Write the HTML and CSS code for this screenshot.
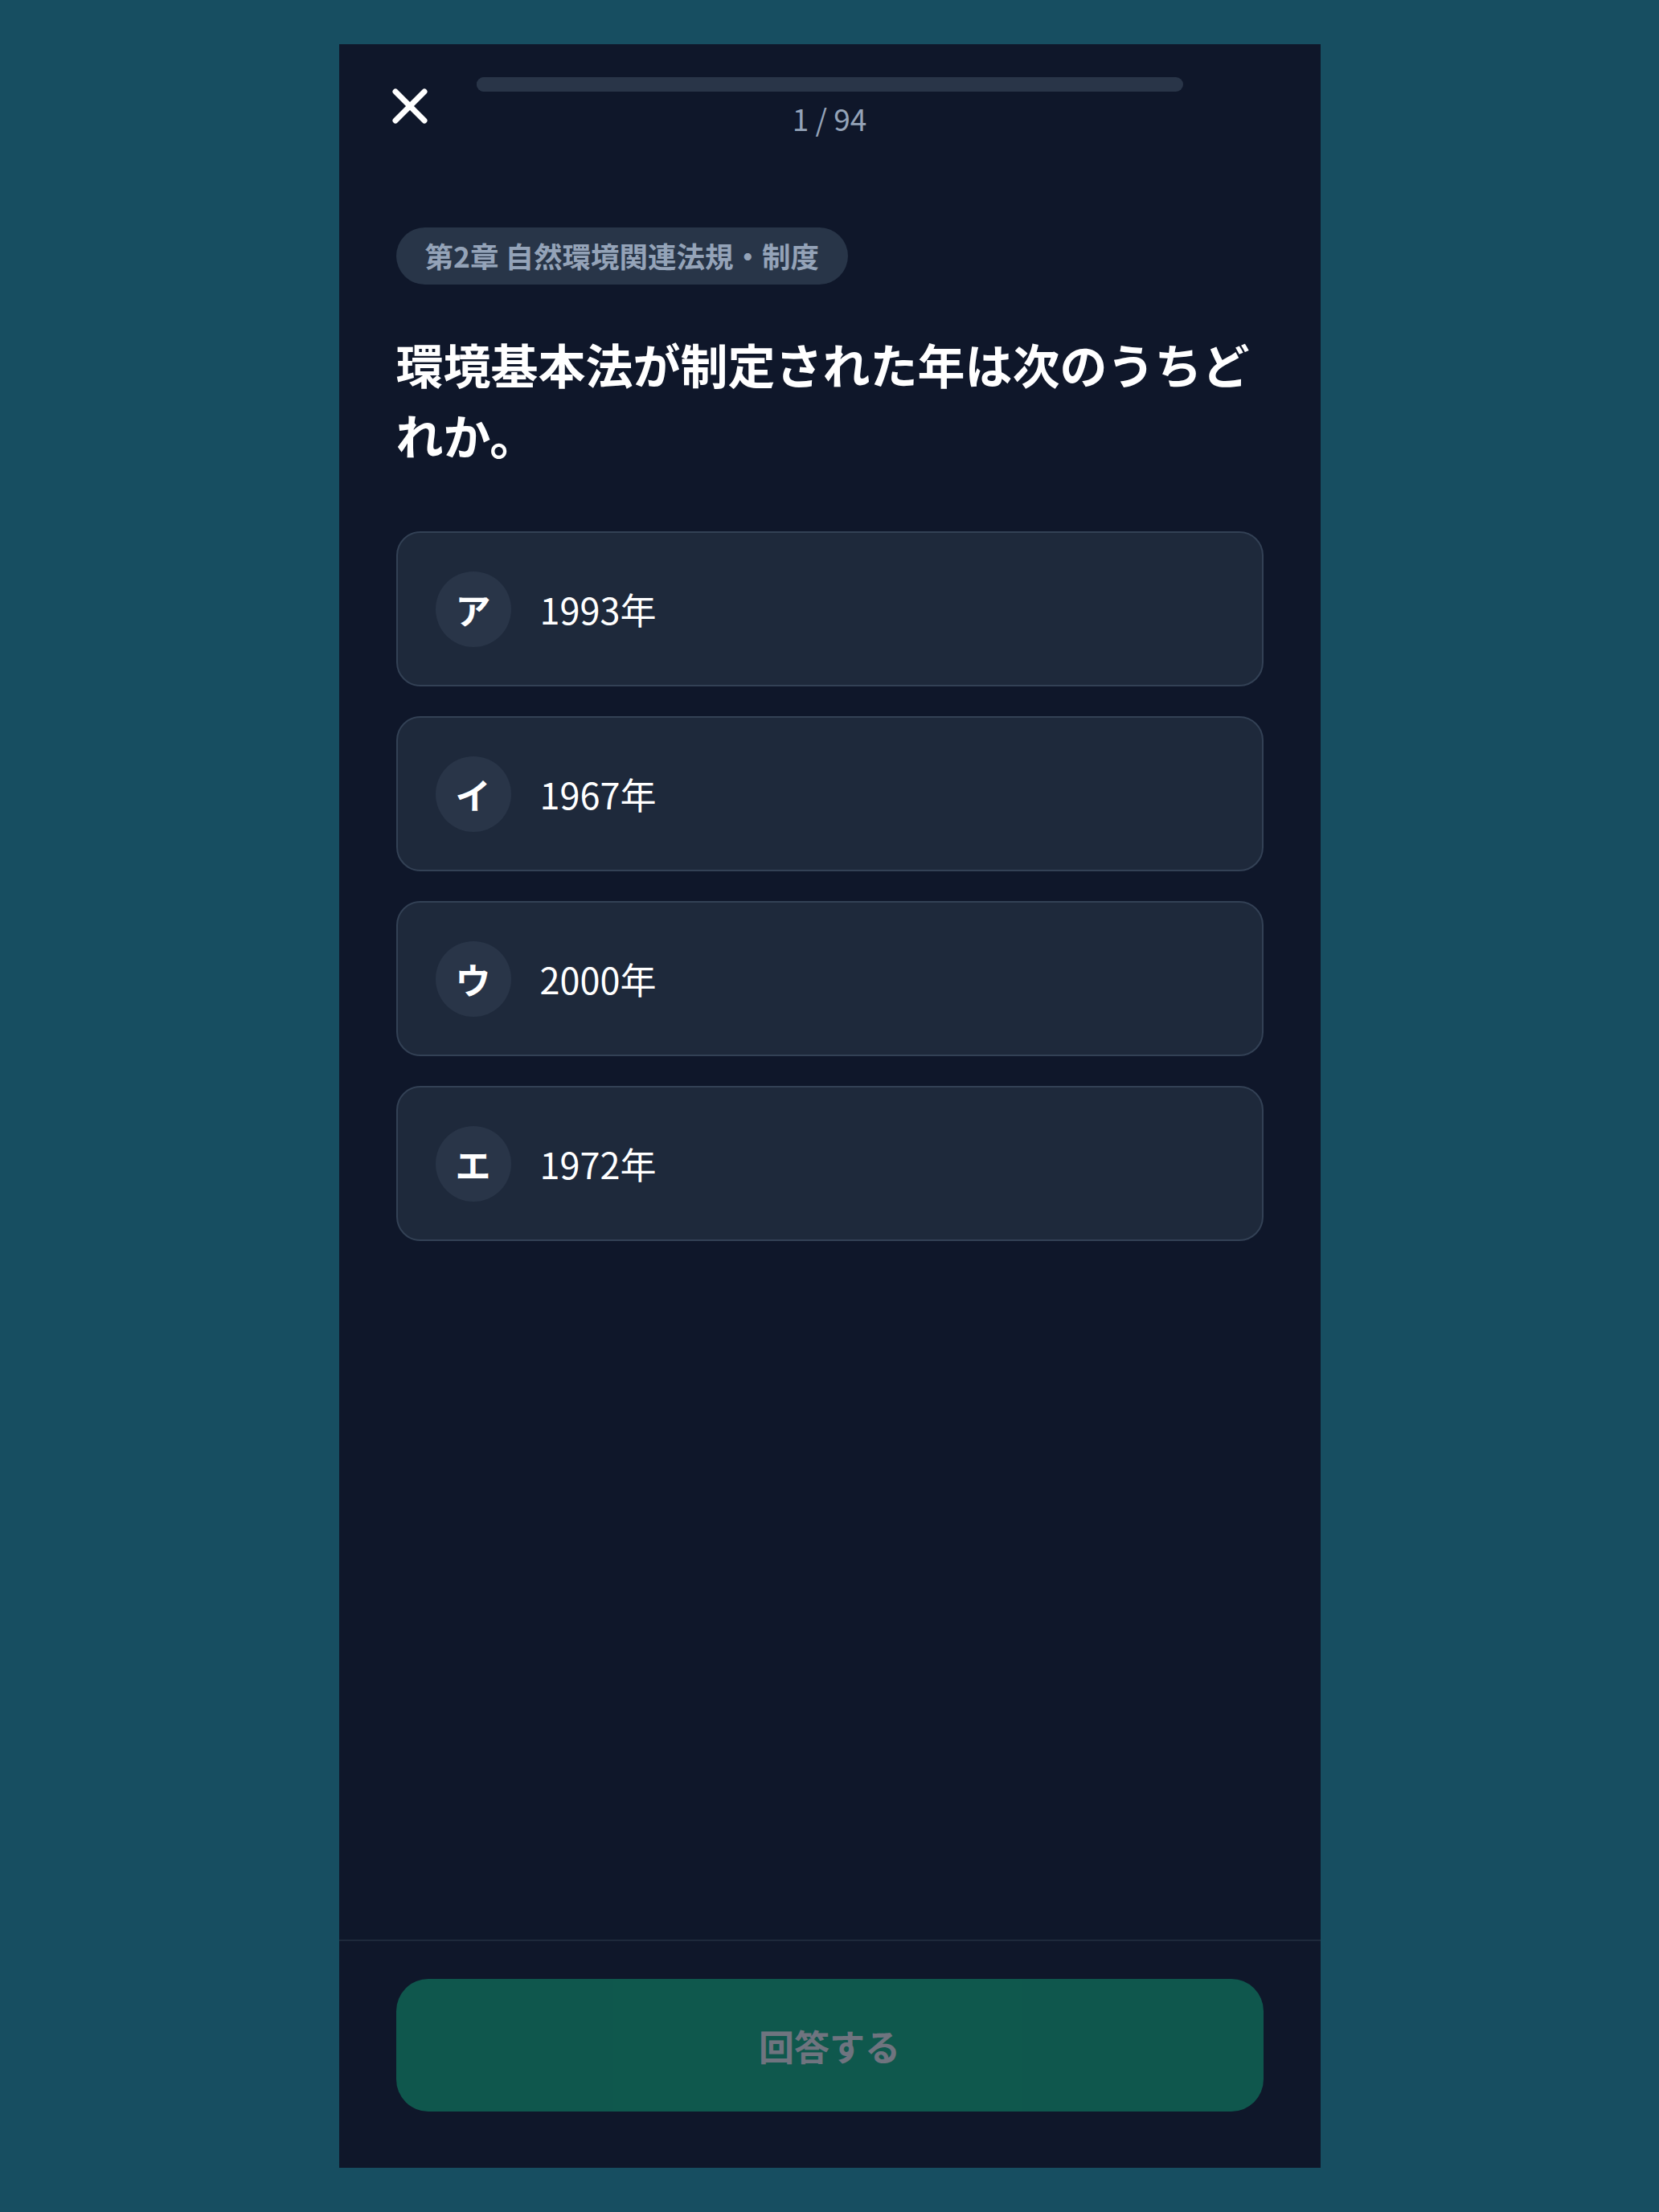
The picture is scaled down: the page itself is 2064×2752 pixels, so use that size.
FILE: index.html
```html
<!DOCTYPE html>
<html lang="ja">
<head>
  <meta charset="UTF-8" />
  <meta name="viewport" content="width=device-width, initial-scale=1" />
  <title>環境社会検定 過去問</title>
  <link rel="stylesheet" href="styles.css">
</head>
<body>
  <div class="quiz">
    <header class="quiz-header">
      <button class="close-btn" aria-label="閉じる">
        <svg width="56" height="56" viewBox="0 0 56 56">
          <path d="M6 9 L42 45 M42 9 L6 45" stroke="#ffffff" stroke-width="7" stroke-linecap="round" fill="none" />
        </svg>
      </button>
      <div class="progress">
        <div class="progress-track"><div class="progress-fill" style="width: 1.06%;"></div></div>
        <div class="progress-count">1 / 94</div>
      </div>
      <div class="header-spacer"></div>
    </header>

    <main class="quiz-body">
      <span class="chapter">第2章 自然環境関連法規・制度</span>
      <h1 class="question">環境基本法が制定された年は次のうちどれか。</h1>

      <div class="choices">
        <button class="choice"><span class="choice-mark">ア</span><span class="choice-text">1993年</span></button>
        <button class="choice"><span class="choice-mark">イ</span><span class="choice-text">1967年</span></button>
        <button class="choice"><span class="choice-mark">ウ</span><span class="choice-text">2000年</span></button>
        <button class="choice"><span class="choice-mark">エ</span><span class="choice-text">1972年</span></button>
      </div>
    </main>

    <footer class="quiz-footer">
      <button class="answer-btn" disabled>回答する</button>
    </footer>
  </div>
</body>
</html>
```

FILE: styles.css
```css
/* Page */
body {
  margin: 0;
  padding: 55px 0;
  background-color: #174e61;
  display: flex;
  justify-content: center;
  font-family: "Noto Sans CJK JP", "Noto Sans", sans-serif;
  color: #f8fafc;
}
button {
  font-family: inherit;
  border: none;
  background: none;
  padding: 0;
  cursor: pointer;
}

/* Phone frame */
.quiz {
  width: 1221px;
  height: 2642px;
  background-color: #0f172a;
  display: flex;
  flex-direction: column;
}

/* Header with close + progress */
.quiz-header {
  display: flex;
  align-items: center;
  gap: 51px;
  padding: 41px 64px 0;
}
.close-btn {
  width: 56px;
  height: 56px;
  display: flex;
}
.header-spacer {
  width: 56px;
}
.progress {
  flex: 1;
  display: flex;
  flex-direction: column;
  align-items: center;
  gap: 11px;
}
.progress-track {
  width: 100%;
  height: 18px;
  border-radius: 9px;
  background-color: #293548;
  overflow: hidden;
}
.progress-fill {
  height: 100%;
  background-color: #293548;
}
.progress-count {
  font-size: 37px;
  line-height: 44px;
  color: #94a3b8;
}

/* Question area */
.quiz-body {
  flex: 1;
  padding: 114px 71px 0;
  display: flex;
  flex-direction: column;
  align-items: flex-start;
}
.chapter {
  display: inline-block;
  height: 71px;
  line-height: 69px;
  padding: 0 36px;
  border-radius: 36px;
  background-color: #283548;
  color: #94a3b8;
  font-size: 35.5px;
  font-weight: bold;
}
.question {
  margin: 55px 0 76px;
  font-size: 59px;
  line-height: 88px;
  font-weight: bold;
  color: #ffffff;
}

/* Answer choices */
.choices {
  align-self: stretch;
  display: flex;
  flex-direction: column;
  gap: 37px;
}
.choice {
  height: 193px;
  box-sizing: border-box;
  display: flex;
  align-items: center;
  gap: 36px;
  padding: 0 47px;
  border: 2px solid #334155;
  border-radius: 30px;
  background-color: #1e293b;
  color: #ffffff;
  text-align: left;
}
.choice-mark {
  width: 94px;
  height: 94px;
  border-radius: 50%;
  background-color: #293548;
  display: flex;
  align-items: center;
  justify-content: center;
  font-size: 44px;
  font-weight: bold;
}
.choice-text {
  font-size: 45px;
}

/* Submit bar */
.quiz-footer {
  border-top: 2px solid #1e293b;
  padding: 47px 71px 70px;
}
.answer-btn {
  width: 100%;
  height: 165px;
  border-radius: 40px;
  background-color: #10b981;
  color: #ffffff;
  font-size: 44px;
  font-weight: bold;
  opacity: 0.4;
  cursor: not-allowed;
}
```
